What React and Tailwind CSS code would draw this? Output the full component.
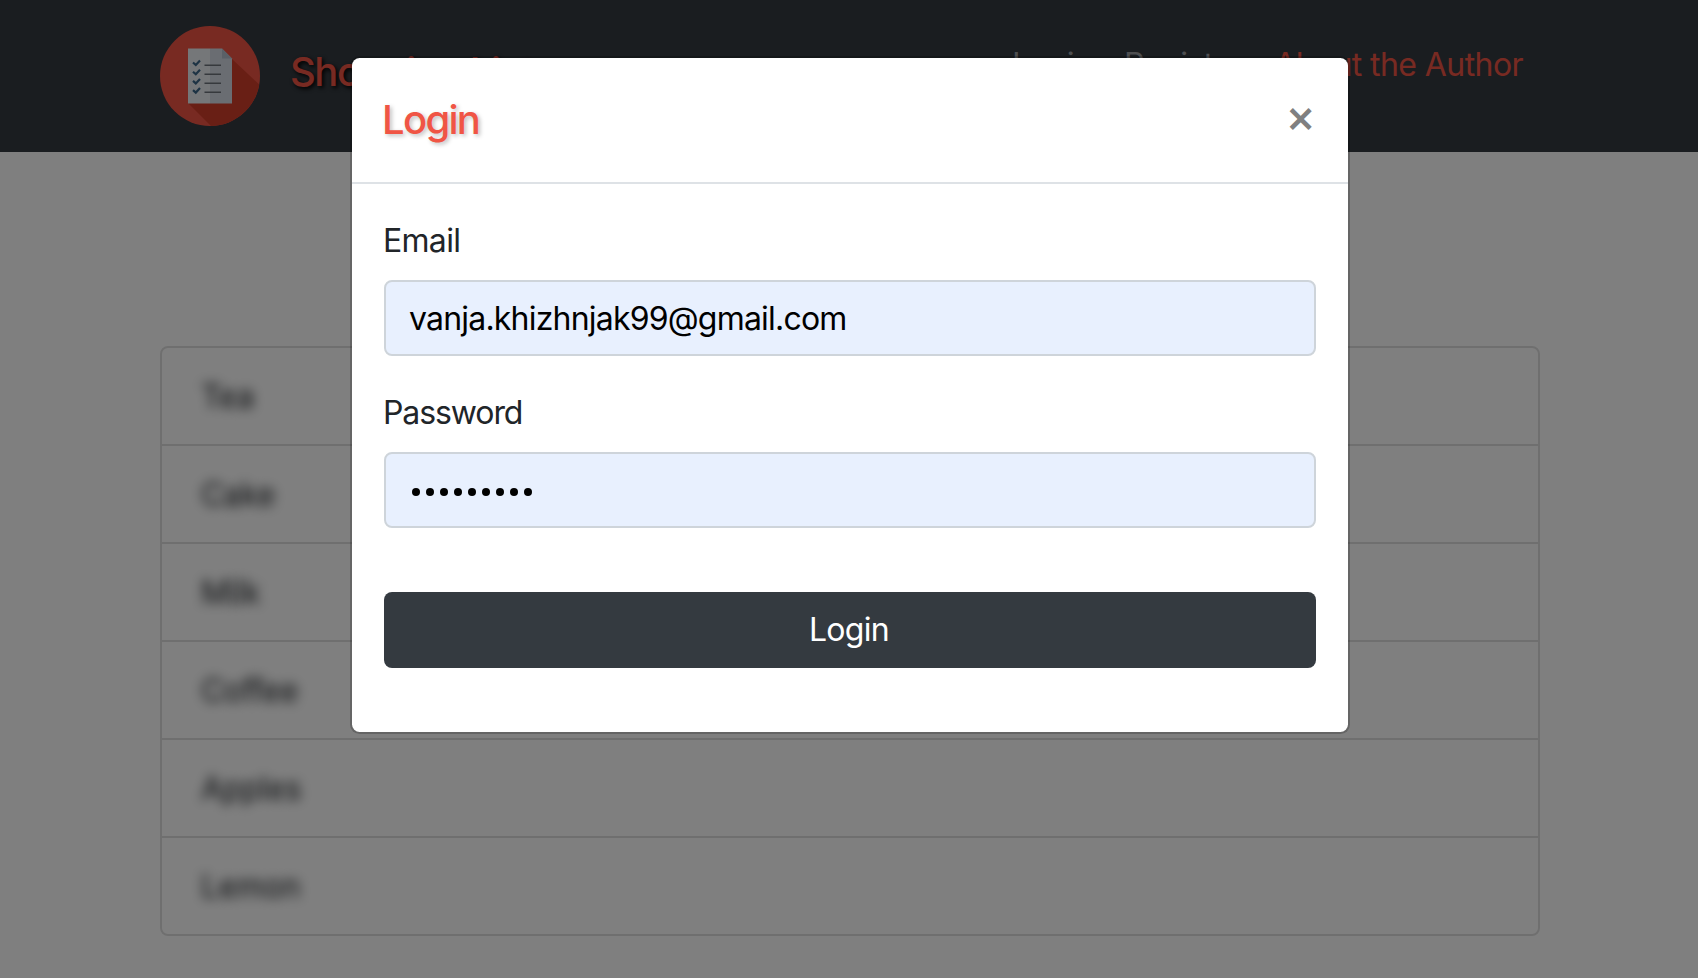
const items = ['Tea', 'Cake', 'Milk', 'Coffee', 'Apples', 'Lemon'];

function Logo() {
  return (
    <svg viewBox="0 0 100 100" className="size-[100px] shrink-0">
      <defs>
        <clipPath id="disc">
          <circle cx="50" cy="50" r="50" />
        </clipPath>
      </defs>
      <circle cx="50" cy="50" r="50" fill="#f05545" />
      <path d="M28 77 L72 33 L102 61 V102 H53 Z" fill="#d23f2b" clipPath="url(#disc)" />
      <path d="M28 22.500H50V77.500H28Z" fill="#eaeef2" />
      <path d="M50 22.500H62L72 32.500V77.500H50Z" fill="#d5dbe5" />
      <path d="M62 22.500V32.500H72Z" fill="#b4c0ce" />
      <g fill="none" stroke="#3a6688" strokeWidth="2.200">
        <path d="M33 36.500l2.800 2.500L40 34.500" />
        <path d="M33 45.700l2.800 2.500L40 43.700" />
        <path d="M33 54.900l2.800 2.500L40 52.900" />
        <path d="M33 64.100l2.800 2.500L40 62.100" />
      </g>
      <g stroke="#6d727b" strokeWidth="1.400">
        <path d="M44.500 39.300H61M44.500 48.300H61M44.500 57.300H61M44.500 66.300H61" />
      </g>
    </svg>
  );
}

function Field({ label, labelClass, children }) {
  return (
    <label className="mb-8 flex flex-col gap-4">
      <span className={`-ml-px pt-px text-[32px] leading-[47px] ${labelClass}`}>{label}</span>
      <span className="flex h-[76px] items-center rounded-lg border-2 border-[#ced4da] bg-[#e8f0fe] px-6 text-[32px] text-black">
        {children}
      </span>
    </label>
  );
}

function LoginModal() {
  return (
    <div className="absolute inset-0 flex items-start justify-center bg-black/50 pt-14">
      <div
        role="dialog"
        className="ml-[2px] w-[1000px] rounded-[9.6px] border-2 border-black/20 bg-white bg-clip-padding"
      >
        <div className="flex h-[126px] items-start justify-between border-b-2 border-[#dee2e6] p-8">
          <h5 className="-ml-[2px] text-[40px] leading-[60px] font-[450] tracking-[-1.7px] text-[#f05545] [text-shadow:2px_2px_4px_rgba(0,0,0,0.25)]">
            Login
          </h5>
          <button className="pt-px text-[46px] leading-[48px] font-medium text-[#808080]" aria-label="Close">
            ×
          </button>
        </div>
        <form className="flex flex-col p-8">
          <Field label="Email" labelClass="tracking-[-0.7px]">
            <span className="-ml-px pt-[2px] tracking-[-0.8px]">vanja.khizhnjak99@gmail.com</span>
          </Field>
          <Field label="Password" labelClass="tracking-[-1.1px]">
            <span className="flex gap-[6px] pt-1 pl-[2px]">
              {Array.from({ length: 9 }, (_, i) => (
                <span key={i} className="size-2 rounded-full bg-black" />
              ))}
            </span>
          </Field>
          <button
            type="button"
            className="mt-8 mb-8 h-[76px] rounded-lg bg-[#343a40] pr-[2px] text-[32px] tracking-[-0.7px] text-white"
          >
            Login
          </button>
        </form>
      </div>
    </div>
  );
}

export default function App() {
  return (
    <div className="relative flex h-[978px] w-[1698px] flex-col overflow-hidden bg-white font-[Inter,'Liberation_Sans',sans-serif] text-[#212529]">
      <header className="flex h-[152px] shrink-0 items-start bg-[#343a40] pt-[26px] pl-[160px] pr-[158px]">
        <Logo />
        <span className="mt-4 ml-[30px] text-[40px] leading-[60px] font-[450] tracking-[-1.5px] text-[#f05545] [text-shadow:2px_2px_4px_#000]">
          Shopping List
        </span>
        <nav className="mt-[15px] ml-auto flex gap-8 pr-[17px] text-[32px] leading-12 tracking-[-0.7px] text-[#9a9da0]">
          <a>Login</a>
          <a>Register</a>
          <a className="tracking-[-0.58px] text-[#f05545]">About the Author</a>
        </nav>
      </header>
      <ul className="mt-[194px] ml-[160px] w-[1380px] rounded-lg border-2 border-[#dfdfdf]">
        {items.map((item) => (
          <li
            key={item}
            className="flex h-[98px] items-center border-b-2 border-[#dfdfdf] pt-px pl-[39px] text-[32px] tracking-[-0.8px] text-transparent [text-shadow:0_0_12px_#212529] last:h-24 last:border-b-0"
          >
            {item}
          </li>
        ))}
      </ul>
      <LoginModal />
    </div>
  );
}
